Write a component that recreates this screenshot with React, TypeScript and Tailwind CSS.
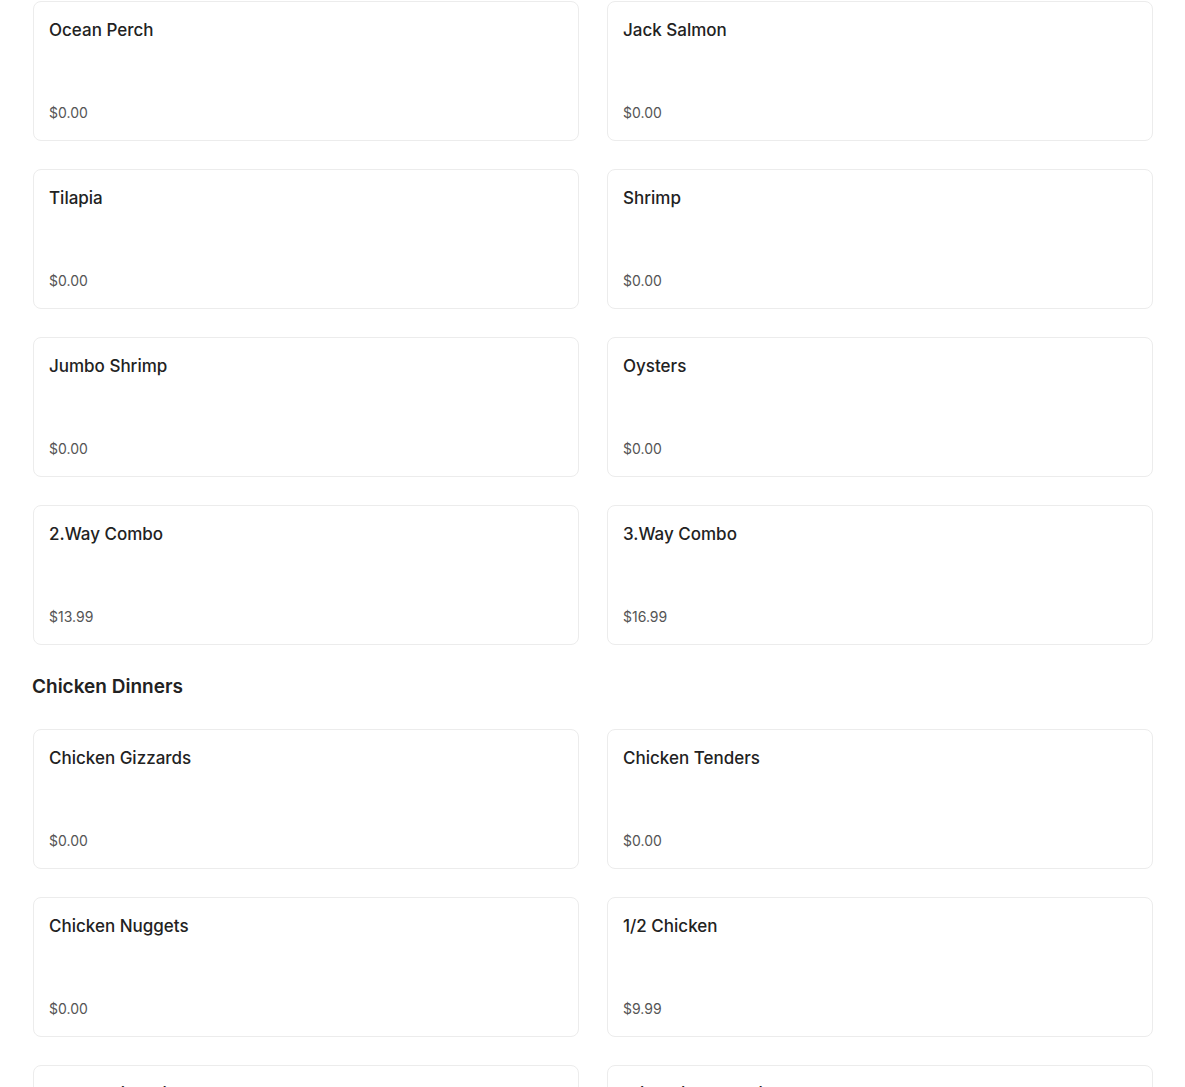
type Item = { name: string; price: string };

const seafood: Item[] = [
  { name: "Ocean Perch", price: "$0.00" },
  { name: "Jack Salmon", price: "$0.00" },
  { name: "Tilapia", price: "$0.00" },
  { name: "Shrimp", price: "$0.00" },
  { name: "Jumbo Shrimp", price: "$0.00" },
  { name: "Oysters", price: "$0.00" },
  { name: "2.Way Combo", price: "$13.99" },
  { name: "3.Way Combo", price: "$16.99" },
];

const chicken: Item[] = [
  { name: "Chicken Gizzards", price: "$0.00" },
  { name: "Chicken Tenders", price: "$0.00" },
  { name: "Chicken Nuggets", price: "$0.00" },
  { name: "1/2 Chicken", price: "$9.99" },
  { name: "Leg & Thigh Dinner", price: "$0.00" },
  { name: "Wings (Whole Wing)", price: "$0.00" },
];

function Card({ item }: { item: Item }) {
  return (
    <div className="h-[140px] border border-[#ececec] rounded-lg bg-white pl-[15px] pr-4 pt-4 pb-[17px] flex flex-col justify-between">
      <div className="text-[17px] leading-6 font-medium text-[#222]">{item.name}</div>
      <div className="text-[14px] leading-5 text-[#555]">{item.price}</div>
    </div>
  );
}

export default function App() {
  return (
    <main className="min-h-screen bg-white" style={{ fontFamily: "Inter, 'Open Sans', sans-serif" }}>
      <div className="max-w-[1121px] mx-auto pl-px pt-px">
        <div className="grid grid-cols-2 gap-7">
          {seafood.map((it) => (
            <Card key={it.name} item={it} />
          ))}
        </div>
        <h2 className="my-7 -ml-px text-[19px] leading-7 font-semibold text-[#222]">Chicken Dinners</h2>
        <div className="grid grid-cols-2 gap-7">
          {chicken.map((it) => (
            <Card key={it.name} item={it} />
          ))}
        </div>
      </div>
    </main>
  );
}
